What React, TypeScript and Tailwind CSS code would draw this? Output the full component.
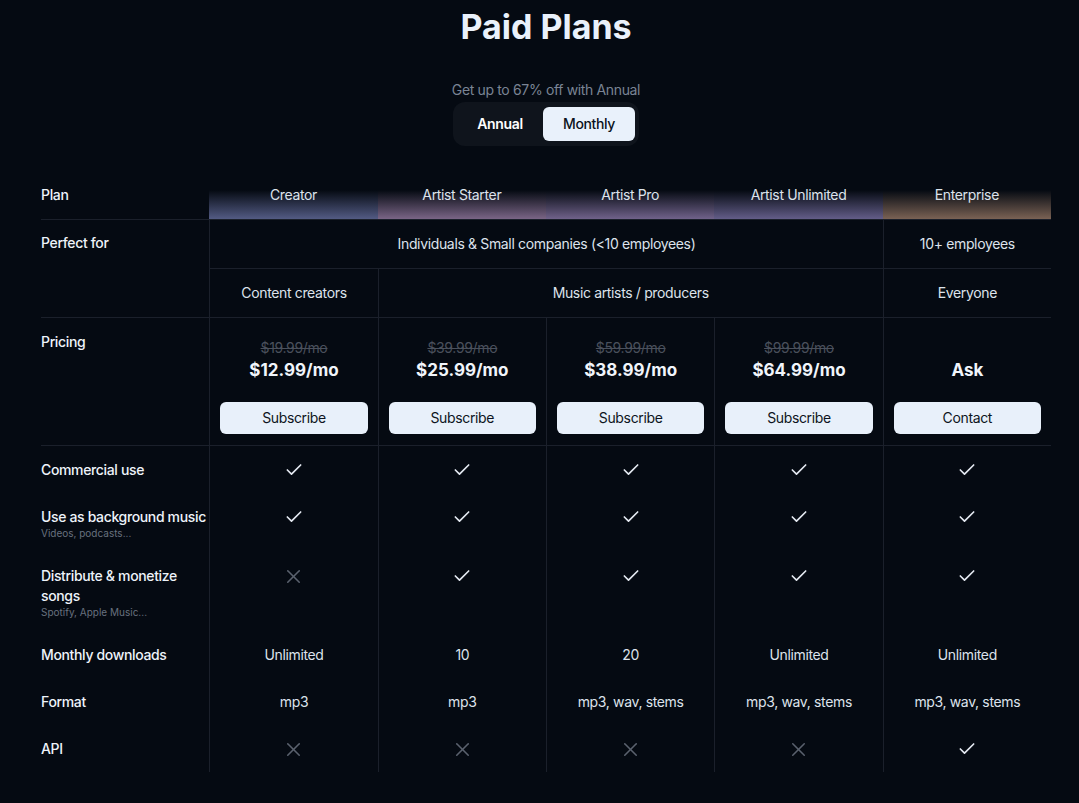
import React from 'react';
import { Check, X } from 'lucide-react';

type Cell = boolean | string;

interface Feature {
  label: string;
  sub?: string;
  nowrap?: boolean;
  values: Cell[];
}

const plans = [
  { name: 'Creator', glow: 'to-[#535b84]' },
  { name: 'Artist Starter', glow: 'to-[#7a6586]' },
  { name: 'Artist Pro', glow: 'to-[#70628a]' },
  { name: 'Artist Unlimited', glow: 'to-[#635d88]' },
  { name: 'Enterprise', glow: 'to-[#7a6254]' },
];

const prices = [
  { old: '$19.99/mo', now: '$12.99/mo', cta: 'Subscribe' },
  { old: '$39.99/mo', now: '$25.99/mo', cta: 'Subscribe' },
  { old: '$59.99/mo', now: '$38.99/mo', cta: 'Subscribe' },
  { old: '$99.99/mo', now: '$64.99/mo', cta: 'Subscribe' },
  { old: '', now: 'Ask', cta: 'Contact' },
];

const features: Feature[] = [
  { label: 'Commercial use', values: [true, true, true, true, true] },
  { label: 'Use as background music', sub: 'Videos, podcasts...', nowrap: true, values: [true, true, true, true, true] },
  { label: 'Distribute & monetize songs', sub: 'Spotify, Apple Music...', values: [false, true, true, true, true] },
  { label: 'Monthly downloads', values: ['Unlimited', '10', '20', 'Unlimited', 'Unlimited'] },
  { label: 'Format', values: ['mp3', 'mp3', 'mp3, wav, stems', 'mp3, wav, stems', 'mp3, wav, stems'] },
  { label: 'API', values: [false, false, false, false, true] },
];

const Value = ({ v }: { v: Cell }) => {
  if (v === true) return <Check size={20} strokeWidth={2} className="text-[#e4e9f1]" />;
  if (v === false) return <X size={23} strokeWidth={1.6} className="text-[#5a616e]" />;
  return <span>{v}</span>;
};

export default function App() {
  return (
    <div className="min-h-screen w-full bg-[#050a12] font-['Inter','Liberation_Sans',sans-serif] text-sm tracking-tight text-[#dde3ec]">
      <div className="ml-[41px] w-[1010px] pt-[7px]">
        <h1 className="text-center text-[34px] font-bold leading-10 tracking-normal text-[#eaf1fb]">Paid Plans</h1>

        <div className="mt-[33px] flex flex-col items-center">
          <p className="leading-5 text-[#7a8494]">Get up to 67% off with Annual</p>
          <div className="mt-[2px] flex rounded-xl bg-[#0f141c] px-1 py-[5px]">
            <button className="h-[34px] w-[86px] rounded-md font-semibold text-white">Annual</button>
            <button className="h-[34px] w-[92px] rounded-md bg-[#e9f1fb] font-medium text-[#0b1220]">Monthly</button>
          </div>
        </div>

        <div className="mt-[25px]">
          {/* header */}
          <div className="grid grid-cols-6 border-b border-[#1b202b]">
            <div className="flex h-12 items-center font-medium text-[#eef3fa]">Plan</div>
            {plans.map((p) => (
              <div
                key={p.name}
                className={`flex h-12 items-center justify-center bg-gradient-to-b from-transparent from-40% ${p.glow}`}
              >
                {p.name}
              </div>
            ))}
          </div>

          {/* perfect for */}
          <div className="flex border-b border-[#1b202b]">
            <div className="w-1/6 shrink-0 pt-[11px] font-medium leading-6 text-[#eef3fa]">Perfect for</div>
            <div className="grid flex-1 grid-cols-5">
              <div className="col-span-4 flex h-[49px] items-center justify-center border-b border-l border-[#1b202b]">
                Individuals &amp; Small companies (&lt;10 employees)
              </div>
              <div className="flex h-[49px] items-center justify-center border-b border-l border-[#1b202b]">10+ employees</div>
              <div className="flex h-12 items-center justify-center border-l border-[#1b202b]">Content creators</div>
              <div className="col-span-3 flex h-12 items-center justify-center border-l border-[#1b202b]">
                Music artists / producers
              </div>
              <div className="flex h-12 items-center justify-center border-l border-[#1b202b]">Everyone</div>
            </div>
          </div>

          {/* pricing */}
          <div className="grid grid-cols-6 border-b border-[#1b202b]">
            <div className="pt-[12px] font-medium leading-6 text-[#eef3fa]">Pricing</div>
            {prices.map((p, i) => (
              <div key={i} className="flex flex-col items-stretch border-l border-[#1b202b] px-[10px] pt-5 pb-[11px]">
                <div className="h-5 text-center leading-5 text-[#4a505c] line-through">{p.old}</div>
                <div className="text-center text-[17px] font-bold leading-6 tracking-normal text-[#f1f5fb]">{p.now}</div>
                <button className="mt-[20px] h-8 rounded-md bg-[#e8f0fa] text-[#0d1421]">{p.cta}</button>
              </div>
            ))}
          </div>

          {/* features */}
          {features.map((f) => (
            <div key={f.label} className="grid grid-cols-6">
              <div className="pt-[14px] pb-[13px]">
                <div className={`font-medium leading-5 text-[#eef3fa] ${f.nowrap ? 'whitespace-nowrap' : ''}`}>{f.label}</div>
                {f.sub && <div className="text-[10px] leading-[12px] tracking-normal text-[#68717f]">{f.sub}</div>}
              </div>
              {f.values.map((v, i) => (
                <div key={i} className="flex justify-center border-l border-[#1b202b] pt-[14px] pb-[13px]">
                  <div className="flex h-5 items-center leading-5">
                    <Value v={v} />
                  </div>
                </div>
              ))}
            </div>
          ))}
        </div>
      </div>
    </div>
  );
}
